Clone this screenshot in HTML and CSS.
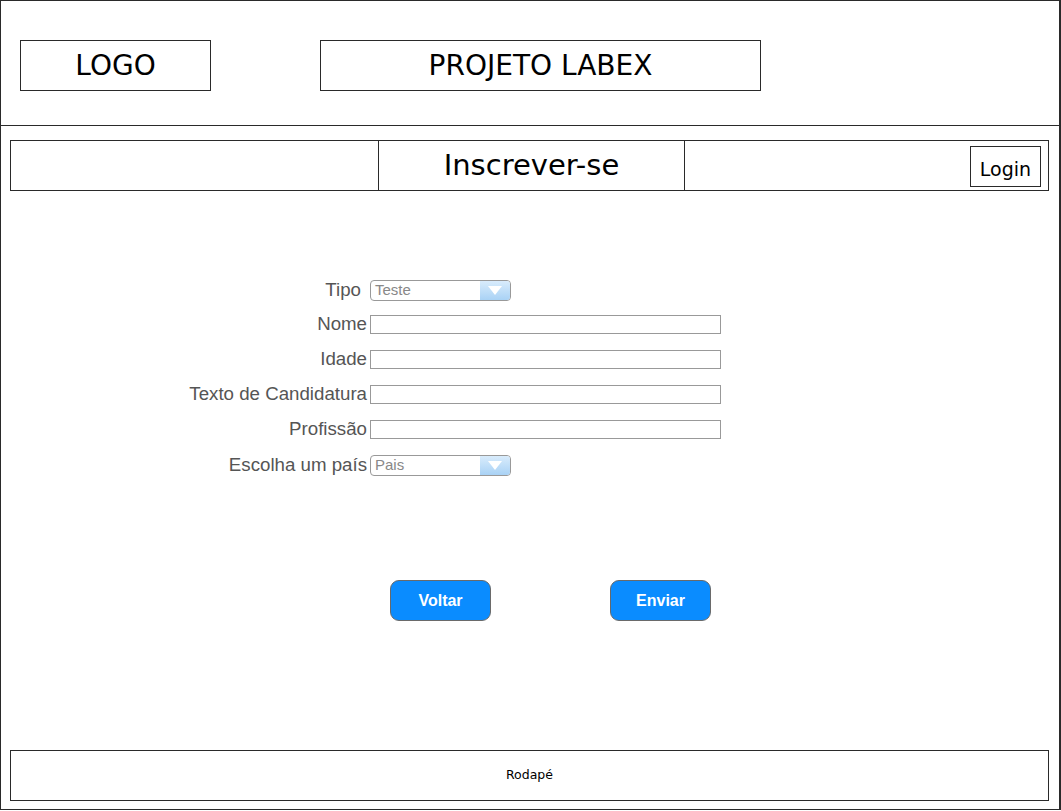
FILE: index.html
```html
<!DOCTYPE html>
<html lang="pt">
<head>
<meta charset="utf-8">
<title>Projeto Labex</title>
<link rel="stylesheet" href="styles.css">
</head>
<body>
<div class="frame">
  <header class="header">
    <div class="sk-box logo">LOGO</div>
    <div class="sk-box title">PROJETO LABEX</div>
  </header>
  <nav class="nav">
    <div class="nav-left"></div>
    <div class="nav-center">Inscrever-se</div>
    <div class="nav-right"><div class="login">Login</div></div>
  </nav>
  <main class="main">
    <form class="form">
      <div class="row sel-row">
        <label class="lbl lbl-tipo">Tipo</label>
        <div class="select"><span class="sel-text">Teste</span><span class="sel-btn"><svg width="16" height="11" viewBox="0 0 16 11"><path d="M1 1 L15 1 L8 10 Z" fill="#fff"/></svg></span></div>
      </div>
      <div class="row">
        <label class="lbl">Nome</label>
        <div class="input"></div>
      </div>
      <div class="row">
        <label class="lbl">Idade</label>
        <div class="input"></div>
      </div>
      <div class="row">
        <label class="lbl">Texto de Candidatura</label>
        <div class="input"></div>
      </div>
      <div class="row">
        <label class="lbl">Profissão</label>
        <div class="input"></div>
      </div>
      <div class="row sel-row">
        <label class="lbl">Escolha um país</label>
        <div class="select"><span class="sel-text">Pais</span><span class="sel-btn"><svg width="16" height="11" viewBox="0 0 16 11"><path d="M1 1 L15 1 L8 10 Z" fill="#fff"/></svg></span></div>
      </div>
    </form>
    <div class="actions">
      <button class="btn" type="button">Voltar</button>
      <button class="btn" type="button">Enviar</button>
    </div>
  </main>
  <footer class="footer">Rodapé</footer>
</div>
</body>
</html>
```
FILE: styles.css
```css
* { box-sizing: border-box; }
html, body { margin: 0; padding: 0; background: #fff; }
.frame {
  width: 1061px;
  height: 810px;
  border: 1px solid #2a2a2a;
  border-right-width: 2px;
  display: flex;
  flex-direction: column;
  font-family: "DejaVu Sans", sans-serif;
  color: #000;
}
.header {
  height: 125px;
  flex-shrink: 0;
  border-bottom: 1px solid #2a2a2a;
  display: flex;
  align-items: flex-start;
  padding: 39px 0 0 19px;
  gap: 109px;
}
.sk-box {
  border: 1px solid #2a2a2a;
  height: 51px;
  display: flex;
  align-items: center;
  justify-content: center;
  font-size: 28px;
  padding-bottom: 1px;
}
.logo { width: 191px; }
.title { width: 441px; }
.nav {
  margin: 14px 10px 0 9px;
  height: 51px;
  flex-shrink: 0;
  border: 1px solid #2a2a2a;
  display: flex;
}
.nav-left { width: 367px; }
.nav-center {
  width: 307px;
  border-left: 1px solid #2a2a2a;
  border-right: 1px solid #2a2a2a;
  display: flex;
  align-items: center;
  justify-content: center;
  font-size: 29px;
  padding-bottom: 2px;
}
.nav-right {
  flex: 1;
  display: flex;
  justify-content: flex-end;
  align-items: flex-start;
  padding: 5px 7px 0 0;
}
.login {
  width: 71px;
  height: 41px;
  border: 1px solid #2a2a2a;
  display: flex;
  align-items: center;
  justify-content: center;
  font-size: 19px;
  padding-top: 4px;
}
.main {
  flex: 1;
  display: flex;
  flex-direction: column;
  padding-top: 89px;
}
.form {
  display: grid;
  grid-template-columns: 366px 1fr;
  grid-auto-rows: 35px;
  align-items: start;
  column-gap: 3px;
  margin: 0;
}
.row { display: contents; }
.lbl {
  font-family: "Liberation Sans", Arial, sans-serif;
  font-size: 18.7px;
  color: #555;
  text-align: right;
  line-height: 18px;
  height: 18px;
  white-space: nowrap;
}
.sel-row .lbl { line-height: 20px; height: 20px; }
.lbl-tipo { padding-right: 6px; }
.input {
  width: 351px;
  height: 19px;
  border: 1px solid #999;
  background: #fff;
}
.select {
  width: 141px;
  height: 21px;
  border: 1px solid #999;
  border-radius: 4px;
  display: flex;
  overflow: hidden;
  background: #fff;
}
.sel-text {
  flex: 1;
  font-family: "Liberation Sans", Arial, sans-serif;
  font-size: 15px;
  color: #888;
  line-height: 17px;
  padding-left: 4px;
}
.sel-btn {
  width: 30px;
  background: linear-gradient(#d9ecfc, #a9d2f5);
  display: flex;
  align-items: center;
  justify-content: center;
}
.actions {
  display: flex;
  gap: 119px;
  padding-left: 389px;
  margin-top: 90px;
}
.btn {
  width: 101px;
  height: 41px;
  background: #0a8cff;
  border: 1px solid #6a6a6a;
  border-radius: 9px;
  color: #fff;
  font-family: "Liberation Sans", Arial, sans-serif;
  font-weight: bold;
  font-size: 16px;
  padding: 0;
}
.footer {
  margin: 0 10px 8px 9px;
  height: 51px;
  flex-shrink: 0;
  border: 1px solid #2a2a2a;
  display: flex;
  align-items: center;
  justify-content: center;
  font-size: 12.5px;
  padding-bottom: 3px;
}
```
